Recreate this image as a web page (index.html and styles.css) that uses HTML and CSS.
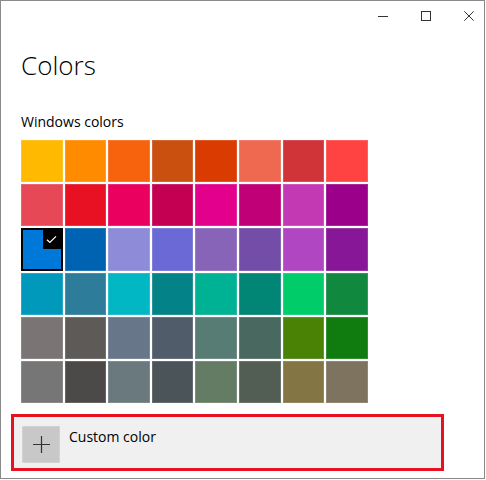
FILE: index.html
```html
<!DOCTYPE html>
<html lang="en">
<head>
    <meta charset="UTF-8">
    <title>Colors</title>
    <link rel="stylesheet" href="styles.css">
</head>
<body>

    <div class="window">
        <div class="title-bar">
            <svg class="caption-icon" viewBox="0 0 10 10"><path d="M0 5.5H10" /></svg>
            <svg class="caption-icon" viewBox="0 0 10 10"><rect x="0.5" y="0.5" width="9" height="9" /></svg>
            <svg class="caption-icon" viewBox="0 0 10 10"><path d="M0.3 0.3L9.7 9.7M9.7 0.3L0.3 9.7" /></svg>
        </div>

        <h1 class="page-title">Colors</h1>
        <h2 class="section-title">Windows colors</h2>

        <div class="swatches">
            <div class="swatch" style="background:#FFB900"></div>
            <div class="swatch" style="background:#FF8C00"></div>
            <div class="swatch" style="background:#F7630C"></div>
            <div class="swatch" style="background:#CA5010"></div>
            <div class="swatch" style="background:#DA3B01"></div>
            <div class="swatch" style="background:#EF6950"></div>
            <div class="swatch" style="background:#D13438"></div>
            <div class="swatch" style="background:#FF4343"></div>

            <div class="swatch" style="background:#E74856"></div>
            <div class="swatch" style="background:#E81123"></div>
            <div class="swatch" style="background:#EA005E"></div>
            <div class="swatch" style="background:#C30052"></div>
            <div class="swatch" style="background:#E3008C"></div>
            <div class="swatch" style="background:#BF0077"></div>
            <div class="swatch" style="background:#C239B3"></div>
            <div class="swatch" style="background:#9A0089"></div>

            <div class="swatch selected" style="background:#0078D7">
                <span class="check">
                    <svg viewBox="0 0 12 10"><path d="M1 5.2L4.2 8.2L11 1.5" /></svg>
                </span>
            </div>
            <div class="swatch" style="background:#0063B1"></div>
            <div class="swatch" style="background:#8E8CD8"></div>
            <div class="swatch" style="background:#6B69D6"></div>
            <div class="swatch" style="background:#8764B8"></div>
            <div class="swatch" style="background:#744DA9"></div>
            <div class="swatch" style="background:#B146C2"></div>
            <div class="swatch" style="background:#881798"></div>

            <div class="swatch" style="background:#0099BC"></div>
            <div class="swatch" style="background:#2D7D9A"></div>
            <div class="swatch" style="background:#00B7C3"></div>
            <div class="swatch" style="background:#038387"></div>
            <div class="swatch" style="background:#00B294"></div>
            <div class="swatch" style="background:#018574"></div>
            <div class="swatch" style="background:#00CC6A"></div>
            <div class="swatch" style="background:#10893E"></div>

            <div class="swatch" style="background:#7A7574"></div>
            <div class="swatch" style="background:#5D5A58"></div>
            <div class="swatch" style="background:#68768A"></div>
            <div class="swatch" style="background:#515C6B"></div>
            <div class="swatch" style="background:#567C73"></div>
            <div class="swatch" style="background:#486860"></div>
            <div class="swatch" style="background:#498205"></div>
            <div class="swatch" style="background:#107C10"></div>

            <div class="swatch" style="background:#767676"></div>
            <div class="swatch" style="background:#4C4A48"></div>
            <div class="swatch" style="background:#69797E"></div>
            <div class="swatch" style="background:#4A5459"></div>
            <div class="swatch" style="background:#647C64"></div>
            <div class="swatch" style="background:#525E54"></div>
            <div class="swatch" style="background:#847545"></div>
            <div class="swatch" style="background:#7E735F"></div>
        </div>

        <div class="custom-color">
            <div class="plus-box">
                <svg viewBox="0 0 18 18"><path d="M9 0V18M0 9H18" /></svg>
            </div>
            <span class="custom-label">Custom color</span>
        </div>
    </div>

</body>
</html>
```

FILE: styles.css
```css
body {
    margin: 0;
    padding: 0;
    background-color: #fff;
    font-family: "Open Sans", "Noto Sans", sans-serif;
    color: #000;
}

.window {
    box-sizing: border-box;
    width: 485px;
    height: 479px;
    border: 1px solid #8a8a8a;
    background-color: #fff;
}

/* caption buttons */
.title-bar {
    height: 30px;
    display: flex;
    justify-content: flex-end;
    align-items: center;
    gap: 33px;
    padding-right: 10px;
}

.caption-icon {
    width: 10px;
    height: 10px;
    fill: none;
    stroke: #333;
    stroke-width: 1;
}

.page-title {
    font-size: 26px;
    font-weight: 300;
    line-height: 34px;
    margin: 17px 0 0 20px;
}

.section-title {
    font-size: 14px;
    font-weight: 400;
    line-height: 20px;
    margin: 30px 0 0 20px;
}

.swatches {
    display: grid;
    grid-template-columns: repeat(8, 41.6px);
    grid-auto-rows: 42.2px;
    gap: 2px;
    margin: 8px 0 0 20px;
}

.swatch {
    position: relative;
    box-sizing: border-box;
    box-shadow: inset 0 0 0 1px rgba(255, 255, 255, 0.15);
}

.swatch.selected {
    border: 2px solid #000;
    box-shadow: none;
}

/* check badge on the picked colour */
.check {
    position: absolute;
    top: 0;
    right: 0;
    width: 18px;
    height: 19px;
    background-color: #000;
    display: flex;
    align-items: center;
    justify-content: center;
}

.check svg {
    width: 11px;
    height: 9px;
    fill: none;
    stroke: #fff;
    stroke-width: 1.4;
}

.custom-color {
    box-sizing: border-box;
    width: 433px;
    height: 57px;
    margin: 11px 0 0 10px;
    border: 3px solid #e81123;
    background-color: #f0f0f0;
    display: flex;
    align-items: flex-start;
    padding: 9px 8px;
}

.plus-box {
    box-sizing: border-box;
    width: 38px;
    height: 37px;
    background-color: #c8c8c8;
    border: 1px dotted #dcdcdc;
    display: flex;
    align-items: center;
    justify-content: center;
}

.plus-box svg {
    width: 17px;
    height: 17px;
    fill: none;
    stroke: #333;
    stroke-width: 1.3;
}

.custom-label {
    font-size: 14px;
    line-height: 20px;
    margin-left: 9px;
    margin-top: 1px;
}
```
